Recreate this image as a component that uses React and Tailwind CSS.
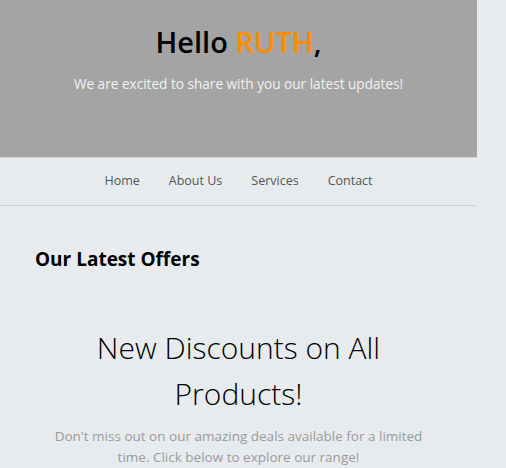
import React from "react";

export default function App() {
  const links = ["Home", "About Us", "Services", "Contact"];

  return (
    <div className="min-h-screen bg-[#e8ebee] font-['Open_Sans',sans-serif]">
      <div className="w-[477px]">
        {/* Header */}
        <div className="h-[158px] bg-[#a4a4a5] border-b border-[#d3d6d9] flex flex-col items-center pt-[23px]">
          <h1 className="text-[29px] font-semibold leading-[38px] text-black">
            Hello <span className="text-[#ff8c00]">RUTH</span>,
          </h1>
          <p className="mt-[14px] text-[13.6px] leading-[18px] text-[#f2f2f2]">
            We are excited to share with you our latest updates!
          </p>
        </div>

        {/* Nav */}
        <nav className="h-[48px] border-b border-[#d0d3d6] flex items-center justify-center gap-[29px]">
          {links.map((l) => (
            <a key={l} className="text-[12.5px] text-[#555] cursor-pointer">
              {l}
            </a>
          ))}
        </nav>

        {/* Offers */}
        <div className="px-[35px] pt-[40px]">
          <h2 className="text-[19px] font-bold leading-[26px] text-black">
            Our Latest Offers
          </h2>
          <div className="mt-[53px] flex flex-col items-center text-center">
            <h3 className="w-[300px] text-[30px] font-light leading-[46px] text-black">
              New Discounts on All Products!
            </h3>
            <p className="mt-[9px] w-[385px] text-[13.5px] leading-[21px] text-[#9a9a9a]">
              Don't miss out on our amazing deals available for a limited time.
              Click below to explore our range!
            </p>
          </div>
        </div>
      </div>
    </div>
  );
}
